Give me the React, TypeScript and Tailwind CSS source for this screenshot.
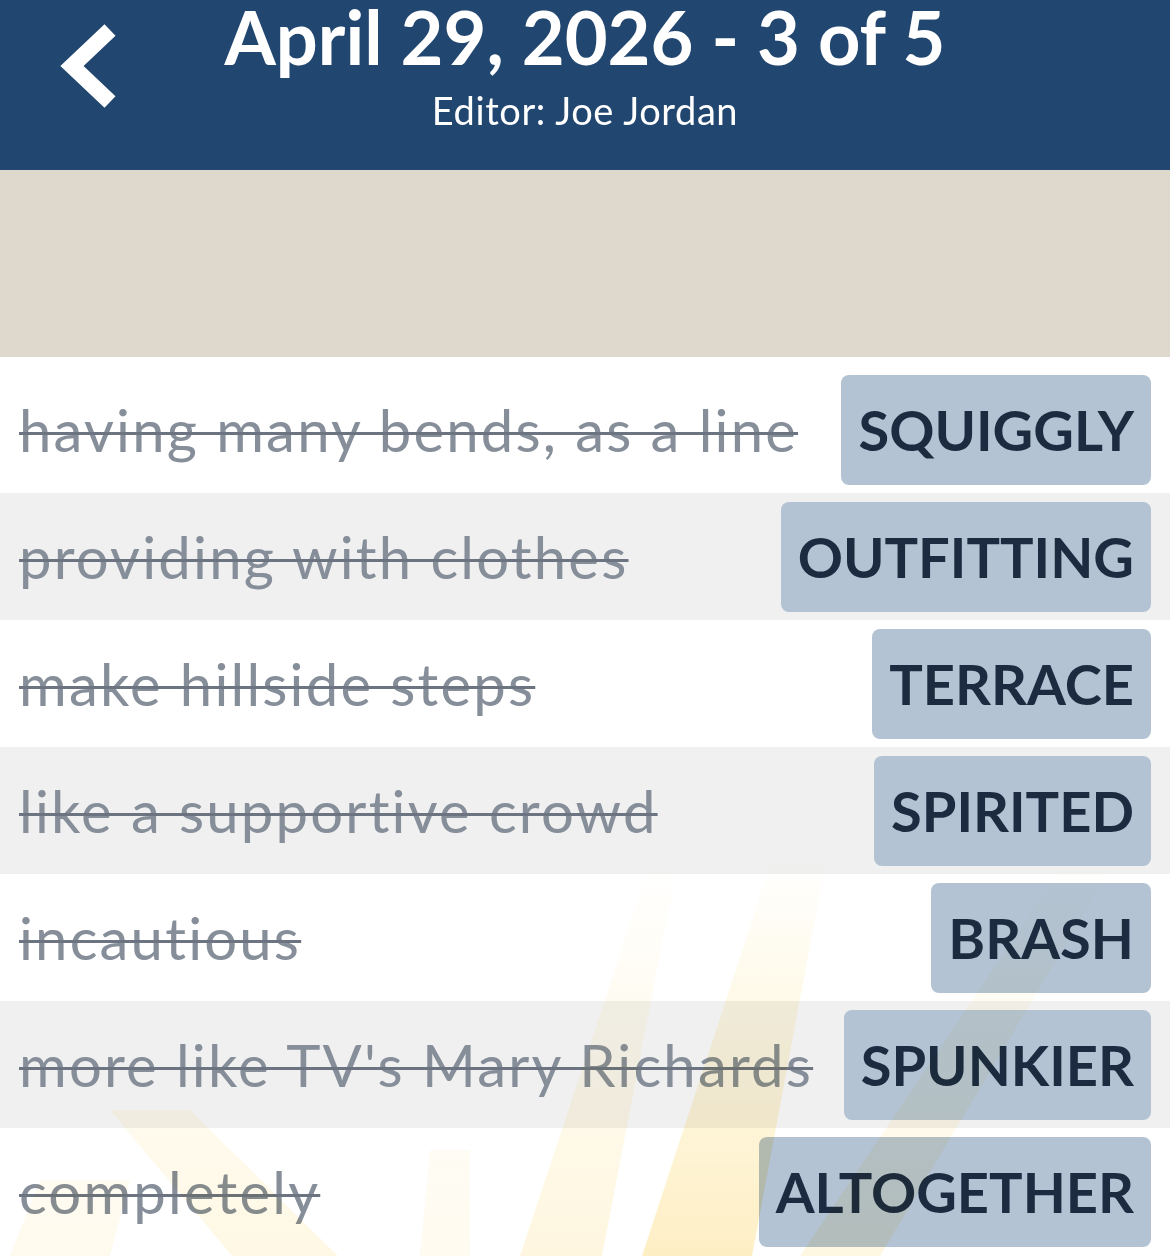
import React from "react";

const rows = [
  { clue: "having many bends, as a line", answer: "SQUIGGLY" },
  { clue: "providing with clothes", answer: "OUTFITTING" },
  { clue: "make hillside steps", answer: "TERRACE" },
  { clue: "like a supportive crowd", answer: "SPIRITED" },
  { clue: "incautious", answer: "BRASH" },
  { clue: "more like TV's Mary Richards", answer: "SPUNKIER" },
  { clue: "completely", answer: "ALTOGETHER" },
];

function Rays() {
  return (
    <svg
      className="pointer-events-none absolute left-0 top-0 mix-blend-multiply"
      width="1170"
      height="1256"
      viewBox="0 0 1170 1256"
    >
      <defs>
        <linearGradient id="fade" x1="0" y1="860" x2="0" y2="1256" gradientUnits="userSpaceOnUse">
          <stop offset="0" stopColor="#fdeaa8" stopOpacity="0" />
          <stop offset="0.4" stopColor="#fdeaa8" stopOpacity="0.3" />
          <stop offset="1" stopColor="#fde49e" stopOpacity="0.6" />
        </linearGradient>
      </defs>
      <polygon points="772,860 826,860 752,1256 642,1256" fill="url(#fade)" />
      <polygon points="648,870 676,870 602,1256 520,1256" fill="url(#fade)" opacity="0.55" />
      <polygon points="1060,870 1110,870 880,1256 800,1256" fill="url(#fade)" opacity="0.5" />
      <polygon points="110,1110 190,1110 338,1256 232,1256" fill="url(#fade)" opacity="0.45" />
      <polygon points="40,1180 130,1180 110,1256 10,1256" fill="url(#fade)" opacity="0.3" />
      <polygon points="430,1150 470,1150 470,1256 420,1256" fill="url(#fade)" opacity="0.25" />
    </svg>
  );
}

export default function App() {
  return (
    <div
      className="relative w-[1170px] h-[1256px] overflow-hidden bg-white"
      style={{ fontFamily: "Lato, 'Noto Sans', sans-serif" }}
    >
      <header className="grid h-[170px] grid-cols-[1fr_auto_1fr] bg-[#21466f]">
        <div className="flex items-start pl-[54px] pt-[20px]">
          <svg width="70" height="92" viewBox="0 0 70 92">
            <polyline
              points="56,10 18,46 56,82"
              fill="none"
              stroke="#ffffff"
              strokeWidth="16"
              strokeLinejoin="miter"
              strokeLinecap="butt"
            />
          </svg>
        </div>
        <div className="flex flex-col items-center pt-[3px] text-white">
          <div className="text-[74px] font-bold leading-[68px]">April 29, 2026 - 3 of 5</div>
          <div className="mt-[19px] text-[38px] leading-[40px] tracking-[0.6px]">Editor: Joe Jordan</div>
        </div>
        <div />
      </header>
      <div className="h-[187px] bg-[#dfd8cd]" />
      <div className="pt-[9px]">
        {rows.map((r, i) => (
          <div
            key={r.answer}
            className={`flex h-[127px] items-center justify-between pl-[19px] pr-[19px] ${
              i % 2 === 1 ? "bg-[#f0f0f0]" : "bg-white"
            }`}
          >
            <span className="text-[58px] leading-none tracking-[2.2px] text-[#868e99] line-through decoration-[#6b7480] decoration-[3px]">
              {r.clue}
            </span>
            <span className="flex h-[110px] items-center rounded-[8px] bg-[#b3c3d3] px-[17px] text-[56px] font-bold leading-none text-[#1c2b40]">
              {r.answer}
            </span>
          </div>
        ))}
      </div>
      <Rays />
    </div>
  );
}
